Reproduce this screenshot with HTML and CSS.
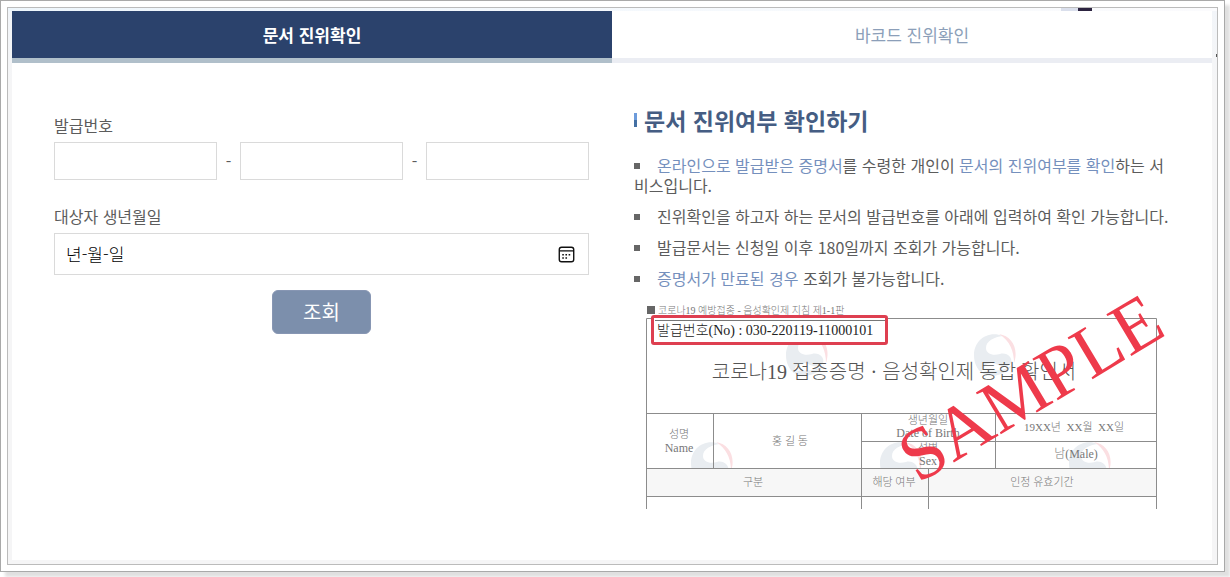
FILE: index.html
```html
<!DOCTYPE html>
<html lang="ko">
<head>
<meta charset="utf-8">
<meta name="viewport" content="width=device-width, initial-scale=1">
<title>문서 진위확인</title>
<link rel="stylesheet" href="styles.css">
</head>
<body>
<div class="frame">
  <div class="frame-inner">
    <main class="panel">
      <nav class="tabs" role="tablist">
        <button class="tab tab-active" type="button" role="tab" aria-selected="true">문서 진위확인</button>
        <button class="tab" type="button" role="tab" aria-selected="false">바코드 진위확인</button>
      </nav>
      <div class="columns">
        <form class="form">
          <label class="label" for="no1">발급번호</label>
          <div class="number-row">
            <input class="field" id="no1" type="text" aria-label="발급번호 1">
            <span class="dash">-</span>
            <input class="field" type="text" aria-label="발급번호 2">
            <span class="dash">-</span>
            <input class="field" type="text" aria-label="발급번호 3">
          </div>
          <label class="label" for="birth">대상자 생년월일</label>
          <div class="date-box">
            <input class="date-input" id="birth" type="text" value="년-월-일">
            <button class="date-button" type="button" aria-label="달력 열기">
              <svg class="calendar" viewBox="0 0 16 16" aria-hidden="true">
                <rect x="1.2" y="1.2" width="13.6" height="13.6" rx="2.2" fill="none" stroke="#111" stroke-width="1.3"/>
                <path d="M1 4.6h14" stroke="#111" stroke-width="1.2"/>
                <path d="M4 7.500h1.500v1.500H4zM7 7.500h1.500v1.500H7zM10 7.500h1.500v1.500H10zM4 10.500h1.500v1.500H4zM7 10.500h1.500v1.500H7z" fill="#111"/>
              </svg>
            </button>
          </div>
          <button class="submit" type="submit">조회</button>
        </form>
        <section class="guide">
          <h2 class="title">문서 진위여부 확인하기</h2>
          <ul class="list">
            <li class="item"><span class="accent">온라인으로 발급받은 증명서</span>를 수령한 개인이 <span class="accent">문서의 진위여부를 확인</span>하는 서비스입니다.</li>
            <li class="item">진위확인을 하고자 하는 문서의 발급번호를 아래에 입력하여 확인 가능합니다.</li>
            <li class="item">발급문서는 신청일 이후 180일까지 조회가 가능합니다.</li>
            <li class="item"><span class="accent">증명서가 만료된 경우</span> 조회가 불가능합니다.</li>
          </ul>
          <svg class="sample" viewBox="0 0 536 216" role="img" aria-label="증명서 견본">
            <defs>
              <g id="emblem">
                <path d="M8-19C-8-25-21-14-21 0C-21 8-18 14-13 18C-13 10-5 6 1 9C7 12 13 13 16 8C18 3 12-3 5-1C-2 1-9-1-9-7C-9-14-1-18 8-19Z" fill="#e9edf1"/>
                <path d="M-13 18C-6 12 4 20 17 10C11 20-4 24-13 18Z" fill="#e9edf1"/>
                <path d="M4-21C17-19 24-6 19 8C19-4 15-14 4-21Z" fill="#fbdfe2"/>
              </g>
              <clipPath id="above-grey"><path d="M0 0h536v170H0z"/></clipPath>
            </defs>
            <use href="#emblem" x="173" y="57"/>
            <use href="#emblem" x="361" y="57"/>
            <g clip-path="url(#above-grey)">
              <use href="#emblem" x="78" y="165"/>
              <use href="#emblem" x="267" y="165"/>
              <use href="#emblem" x="456" y="165"/>
            </g>
            <path d="M12 170h511v28H12z" fill="#f7f7f7"/>
            <path d="M12.500 211V20.500H522.500V211M12 115.500H523M227 143.500H523M12 170.500H523M12 198.500H523M79.500 115V170M227.500 115V211M361.500 115V170M294.500 170V211" fill="none" stroke="#8c8c8c"/>
            <path d="M13 8h8v8h-8z" fill="#666"/>
            <g class="cert">
              <text x="24" y="16" font-size="10">코로나19 예방접종 - 음성확인제 지침 제1-1판</text>
              <text class="cert-title" x="260" y="81" font-size="20" text-anchor="middle">코로나19 접종증명 · 음성확인제 통합 확인서</text>
              <g text-anchor="middle" font-size="11">
                <text x="45" y="140">성명</text>
                <text x="45" y="154" font-size="12">Name</text>
                <text x="156" y="147">홍 길 동</text>
                <text x="294" y="126">생년월일</text>
                <text x="294" y="139" font-size="12">Date of Birth</text>
                <text x="294" y="154">성별</text>
                <text x="294" y="167" font-size="12">Sex</text>
                <text x="440" y="133" xml:space="preserve">19XX년  XX월  XX일</text>
                <text x="442" y="160" font-size="12">남(Male)</text>
                <text x="119" y="188">구분</text>
                <text x="260" y="188">해당 여부</text>
                <text x="408" y="188">인정 유효기간</text>
              </g>
            </g>
            <rect x="18.500" y="18.500" width="234" height="27" rx="1.500" fill="#fff" stroke="#de3f50" stroke-width="3"/>
            <path d="M21 22.500H251" stroke="#777"/>
            <text class="cert-number" x="23" y="37" font-size="14">발급번호(No) : 030-220119-11000101</text>
            <text class="stamp" x="0" y="0" font-size="74" transform="translate(284 186) rotate(-31)">SAMPLE</text>
          </svg>
        </section>
      </div>
    </main>
  </div>
</div>
</body>
</html>
```
FILE: styles.css
```css
* {
  box-sizing: border-box;
}

body {
  margin: 0;
  padding: 0 5px 5px 0;
  min-height: 100vh;
  display: flex;
  background: #fff;
  color: #5c5c5c;
  font-family: "Noto Sans CJK KR", sans-serif;
  font-size: 16px;
}

button,
input {
  font-family: inherit;
  margin: 0;
}

.frame {
  flex: 1;
  display: flex;
  border: 1px solid #a9a9a9;
  padding: 6px;
  background: #fff;
  box-shadow: 5px 5px 3px #e0e0e0;
}

.frame-inner {
  flex: 1;
  display: flex;
  border: 1px solid #bbb;
  padding: 3px 5px 4px 4px;
  background:
    linear-gradient(#2c2340, #2c2340) right 125px top 0 / 14px 3px no-repeat,
    linear-gradient(#dadfec, #dadfec) right 139px top 0 / 17px 3px no-repeat,
    linear-gradient(#555, #555) right 0 top 46px / 1px 3px no-repeat,
    linear-gradient(90deg, #eef6fc, #fbfbfd) top / 100% 3px no-repeat,
    linear-gradient(#f2f5f9, #f5f5f6 80px);
}

.panel {
  flex: 1;
  background: #fff;
}

.tabs {
  display: grid;
  grid-template-columns: 1fr 1fr;
}

.tab {
  height: 52px;
  padding: 0;
  border: 0;
  border-bottom: 5px solid #ebedf3;
  background: #fff;
  color: #8c9fb9;
  font-size: 17px;
}

.tab-active {
  border-color: #b0bfca;
  background: #2b426c;
  color: #fff;
  font-weight: 700;
}

.columns {
  display: grid;
  grid-template-columns: minmax(0, 1fr) minmax(0, 1fr);
}

.form {
  display: flex;
  flex-direction: column;
  padding: 50px 23px 0 42px;
}

.label {
  line-height: 24px;
  margin-bottom: 5px;
}

.number-row {
  display: flex;
  align-items: center;
  margin-bottom: 24px;
}

.field {
  flex: 1;
  min-width: 0;
  height: 38px;
  border: 1px solid #dadada;
  background: #fff;
  padding: 0 10px;
}

.dash {
  width: 23px;
  text-align: center;
}

.date-box {
  display: flex;
  align-items: center;
  height: 42px;
  padding: 0 13px 0 11px;
  border: 1px solid #dadada;
}

.date-input {
  flex: 1;
  min-width: 0;
  border: 0;
  padding: 0 0 2px;
  background: none;
  color: #000;
  font-size: 17px;
  font-weight: 300;
}

.date-button {
  display: flex;
  padding: 0;
  border: 0;
  background: none;
}

.calendar {
  width: 17px;
  height: 17px;
}

.submit {
  align-self: center;
  width: 99px;
  height: 44px;
  margin-top: 15px;
  padding: 0 0 2px;
  border: 1px solid #8796b3;
  border-radius: 6px;
  background: #7c8fac;
  color: #fff;
  font-size: 20px;
}

.guide {
  padding: 41px 42px 0 22px;
}

.title {
  display: flex;
  align-items: center;
  gap: 7px;
  margin: 0 0 19px;
  color: #455d83;
  font-size: 23px;
  font-weight: 700;
  line-height: 32px;
}

.title::before {
  content: "";
  width: 3px;
  height: 14px;
  background: linear-gradient(#6d9bdb 50%, #4470a3 50%);
}

.list {
  display: grid;
  gap: 11px;
  margin: 0;
  padding: 0;
  list-style: none;
}

.item {
  line-height: 20px;
}

.item::before {
  content: "";
  display: inline-block;
  width: 6px;
  height: 6px;
  margin-right: 17px;
  background: #666;
  vertical-align: 3px;
}

.accent {
  color: #7590bd;
}

.sample {
  display: block;
  width: 100%;
  margin-top: 10px;
  overflow: visible;
}

.cert,
.cert-number {
  font-family: "Liberation Serif", "Noto Sans CJK KR", serif;
  font-weight: 300;
}

.cert {
  fill: #777;
}

.cert-title {
  fill: #555;
}

.cert-number {
  fill: #222;
}

.stamp {
  fill: #ee3a4b;
  font-family: "Liberation Serif", serif;
}
```
